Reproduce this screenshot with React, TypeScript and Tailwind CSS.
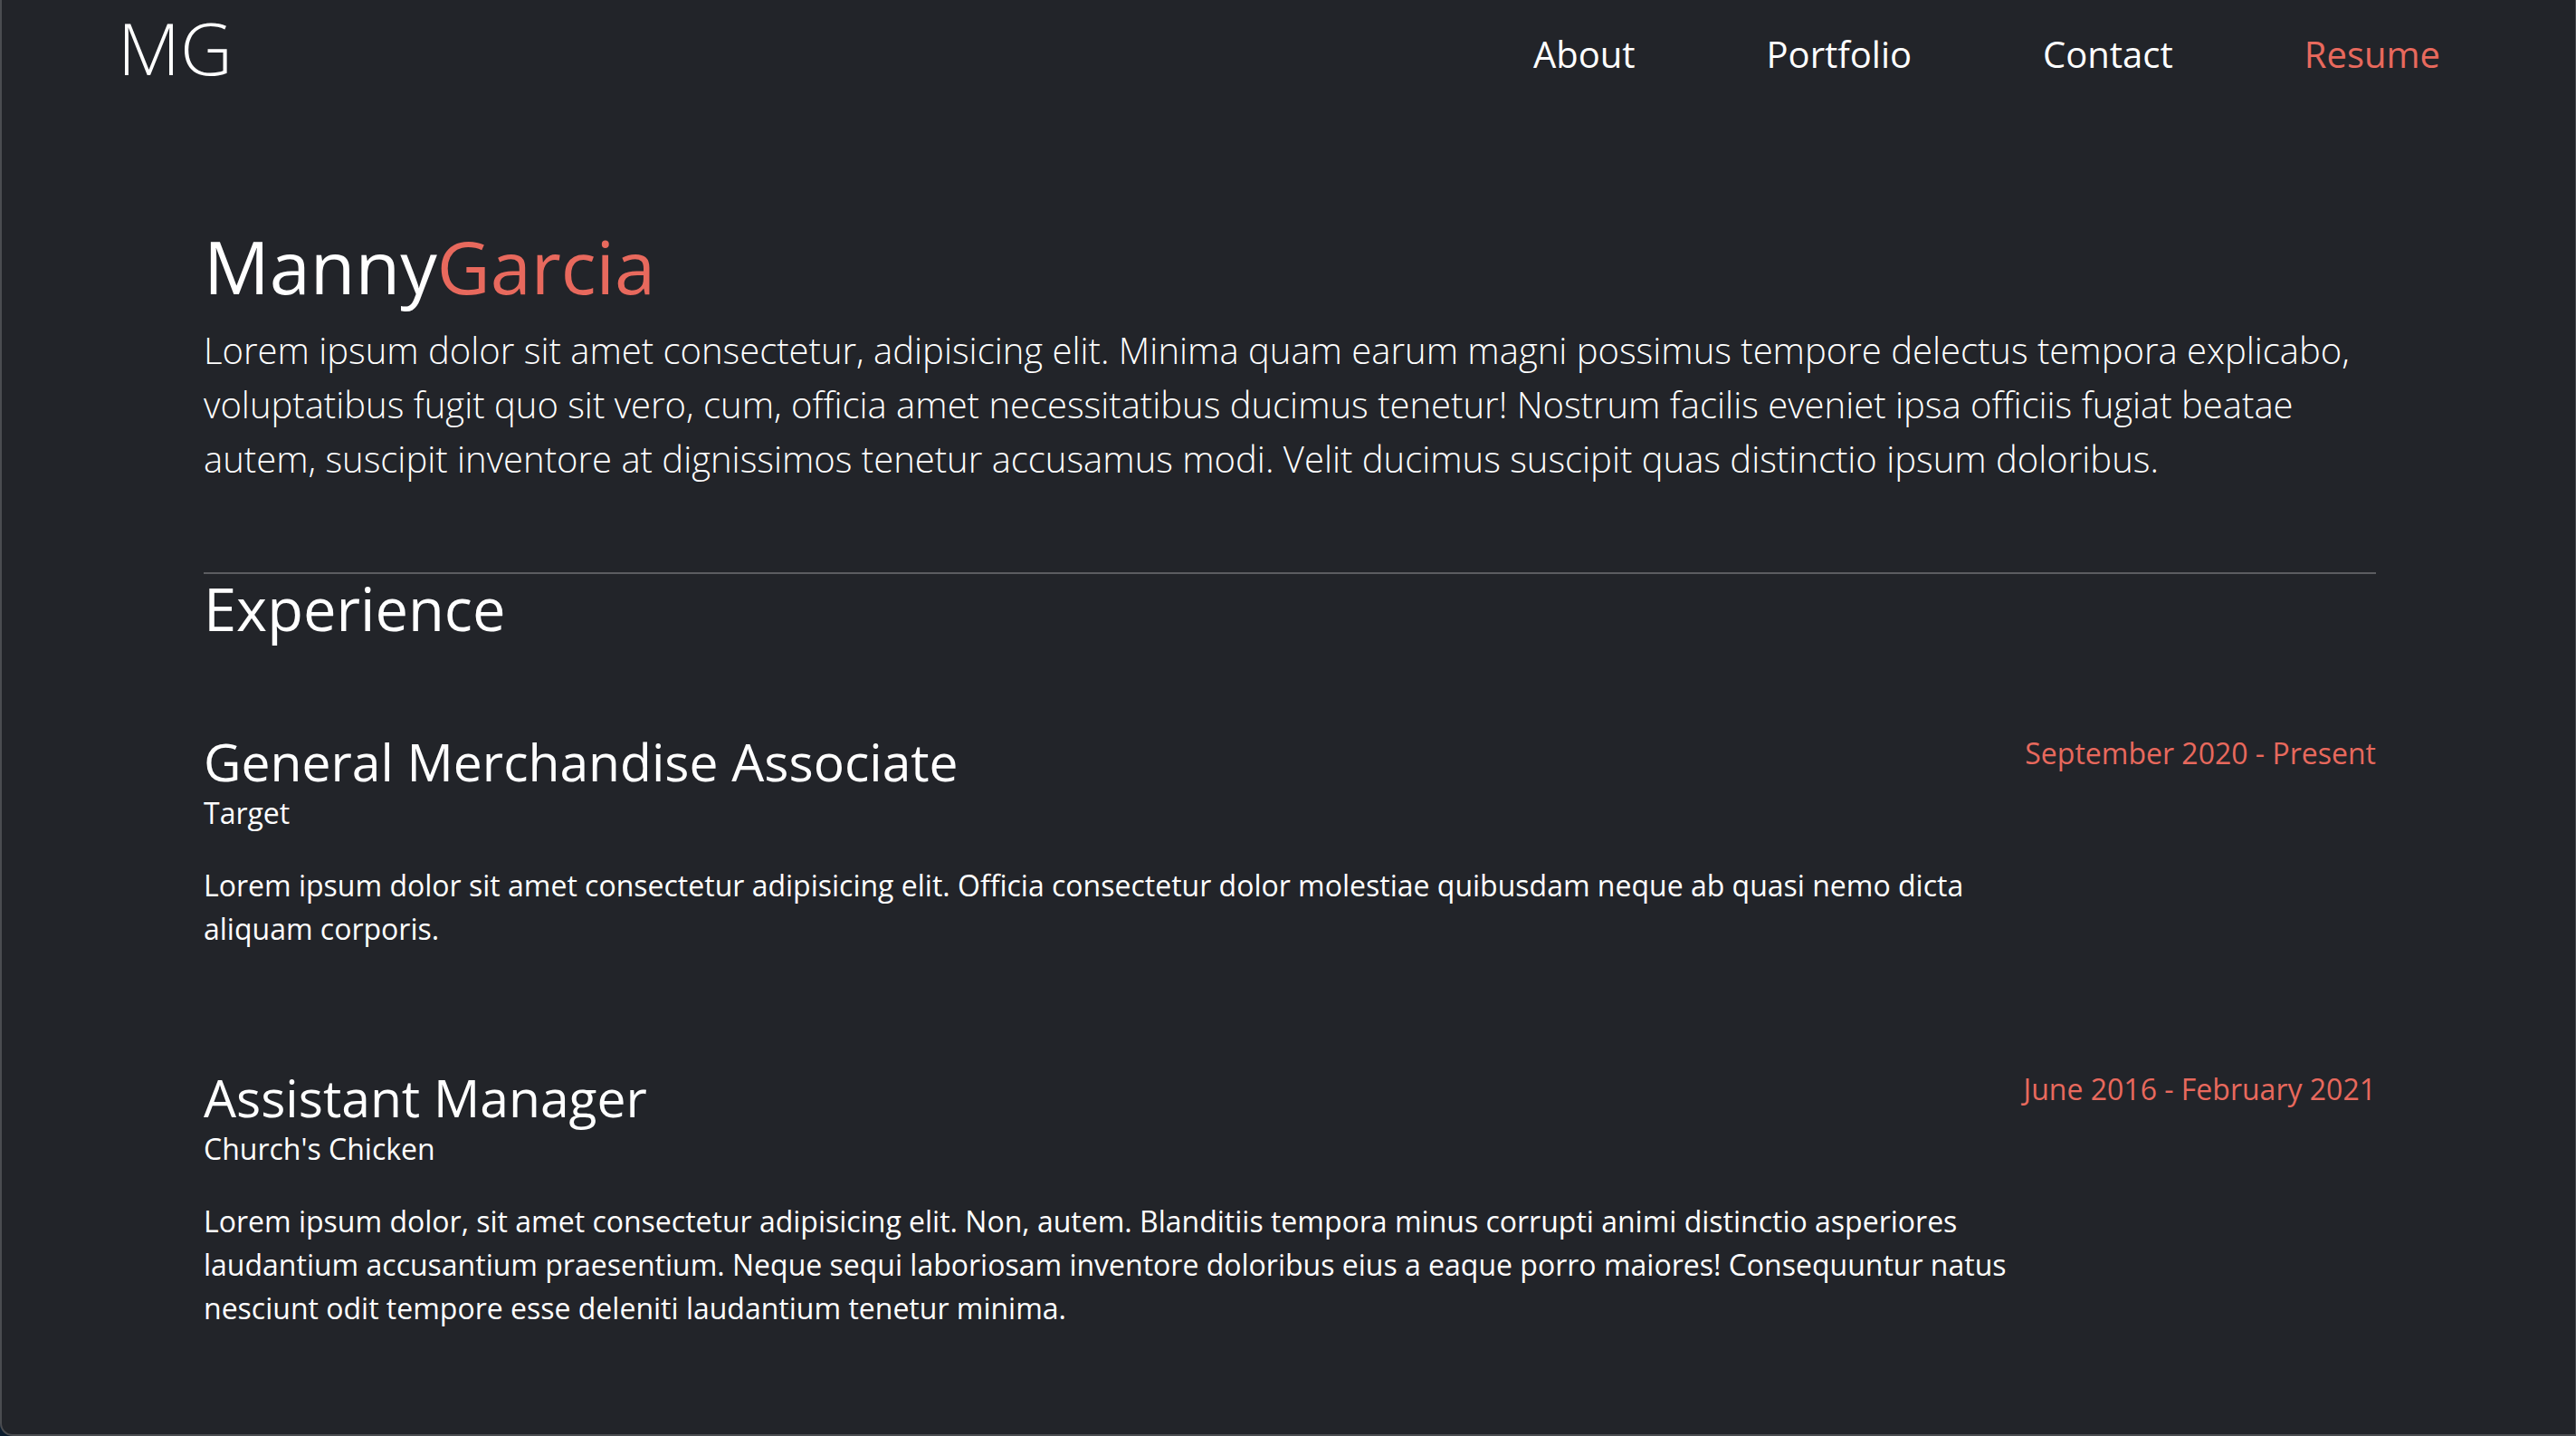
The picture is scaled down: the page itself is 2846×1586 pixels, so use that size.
const jobs = [
  {
    title: "General Merchandise Associate",
    company: "Target",
    dates: "September 2020 - Present",
    text: "Lorem ipsum dolor sit amet consectetur adipisicing elit. Officia consectetur dolor molestiae quibusdam neque ab quasi nemo dicta aliquam corporis.",
  },
  {
    title: "Assistant Manager",
    company: "Church's Chicken",
    dates: "June 2016 - February 2021",
    text: "Lorem ipsum dolor, sit amet consectetur adipisicing elit. Non, autem. Blanditiis tempora minus corrupti animi distinctio asperiores laudantium accusantium praesentium. Neque sequi laboriosam inventore doloribus eius a eaque porro maiores! Consequuntur natus nesciunt odit tempore esse deleniti laudantium tenetur minima.",
  },
]

export default function App() {
  return (
    <div className="bg-[#0b1c2e] w-full h-[1586px]">
      <div className="h-full bg-[#222429] text-white font-['Open_Sans',sans-serif] border-l-2 border-b-2 border-r border-[#4a4c50] rounded-bl-[14px] overflow-hidden">
        {/* Header */}
        <header className="flex items-start justify-between pl-[128px] pr-[149px]">
          <div className="-mt-[4px] text-[80px] leading-[112px] font-light">MG</div>
          <nav className="mt-[40px] flex gap-[145px] text-[40px] leading-none">
            <a href="#" className="text-white">About</a>
            <a href="#" className="text-white">Portfolio</a>
            <a href="#" className="text-white">Contact</a>
            <a href="#" className="text-[#e8695d]">Resume</a>
          </nav>
        </header>

        <main className="ml-[223px] w-[2400px]">
          {/* Intro */}
          <h1 className="mt-[145px] text-[81px] leading-none">
            Manny<span className="text-[#e8695d]">Garcia</span>
          </h1>
          <p className="mt-[23px] text-[40px] leading-[60px] font-light">
            Lorem ipsum dolor sit amet consectetur, adipisicing elit. Minima quam earum magni possimus tempore delectus tempora explicabo, voluptatibus fugit quo sit vero, cum, officia amet necessitatibus ducimus tenetur! Nostrum facilis eveniet ipsa officiis fugiat beatae autem, suscipit inventore at dignissimos tenetur accusamus modi. Velit ducimus suscipit quas distinctio ipsum doloribus.
          </p>

          <hr className="mt-[95px] border-0 h-[2px] bg-[#5c5d61]" />

          {/* Experience */}
          <h2 className="mt-[6px] text-[65px] leading-none">Experience</h2>

          <div className="mt-[108px] flex flex-col gap-[134px]">
            {jobs.map((job) => (
              <div key={job.title} className="flex items-start justify-between">
                <div className="w-[2040px]">
                  <h3 className="text-[57px] leading-none">{job.title}</h3>
                  <div className="mt-[12px] text-[32px] leading-none">{job.company}</div>
                  <p className="mt-[40px] text-[32px] leading-[48px]">{job.text}</p>
                </div>
                <div className="mt-[3px] text-[32px] leading-none text-[#e8695d] whitespace-nowrap">
                  {job.dates}
                </div>
              </div>
            ))}
          </div>
        </main>
      </div>
    </div>
  )
}
